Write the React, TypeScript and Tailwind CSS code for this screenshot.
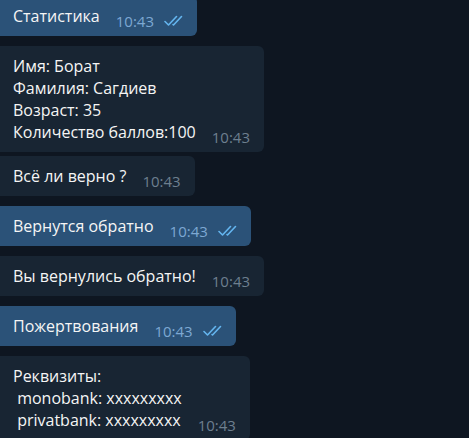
import React from "react"

type Msg = {
  text: string
  out?: boolean
  grouped?: boolean
}

const messages: Msg[] = [
  { text: "Статистика", out: true },
  { text: "Имя: Борат\nФамилия: Сагдиев\nВозраст: 35\nКоличество баллов:100" },
  { text: "Всё ли верно ?", grouped: true },
  { text: "Вернутся обратно", out: true },
  { text: "Вы вернулись обратно!" },
  { text: "Пожертвования", out: true },
  { text: "Реквизиты:\n monobank: xxxxxxxxx\n privatbank: xxxxxxxxx" },
]

function Checks() {
  return (
    <svg width="21" height="12" viewBox="0 0 21 12" fill="none" className="ml-[10px] mb-[1px]">
      <path d="M1 6.5 L4.5 10 L12.5 1.5" stroke="#64b5ef" strokeWidth="1.6" strokeLinecap="round" strokeLinejoin="round" />
      <path d="M9 9.5 L9.5 10 L17.5 1.5" stroke="#64b5ef" strokeWidth="1.6" strokeLinecap="round" strokeLinejoin="round" />
    </svg>
  )
}

function Bubble({ msg, first }: { msg: Msg; first: boolean }) {
  const gap = first ? "-mt-[4px]" : msg.grouped ? "mt-[4px]" : "mt-[10px]"
  return (
    <div
      className={
        (msg.out
          ? "self-start flex items-end rounded-r-[6px] bg-[#2b5278] pl-[13px] pr-[12px] py-[9px] "
          : "self-start flex items-end rounded-r-[6px] bg-[#182533] pl-[13px] pr-[14px] py-[9px] ") + gap
      }
    >
      <div className="whitespace-pre-wrap text-[16px] leading-[22px] text-[#f5f5f5]">
        {msg.text}
      </div>
      <div className="flex items-center translate-y-[5px] ml-[16px]">
        <span
          className={
            msg.out
              ? "text-[15px] leading-[22px] text-[#7da8d3]"
              : "text-[15px] leading-[22px] text-[#6d7f8f]"
          }
        >
          10:43
        </span>
        {msg.out && <Checks />}
      </div>
    </div>
  )
}

export default function App() {
  return (
    <div
      className="h-screen overflow-hidden bg-[#0e1621]"
      style={{ fontFamily: '"Open Sans", "Noto Sans", sans-serif' }}
    >
      <div className="flex flex-col">
        {messages.map((m, i) => (
          <Bubble key={i} msg={m} first={i === 0} />
        ))}
      </div>
    </div>
  )
}
